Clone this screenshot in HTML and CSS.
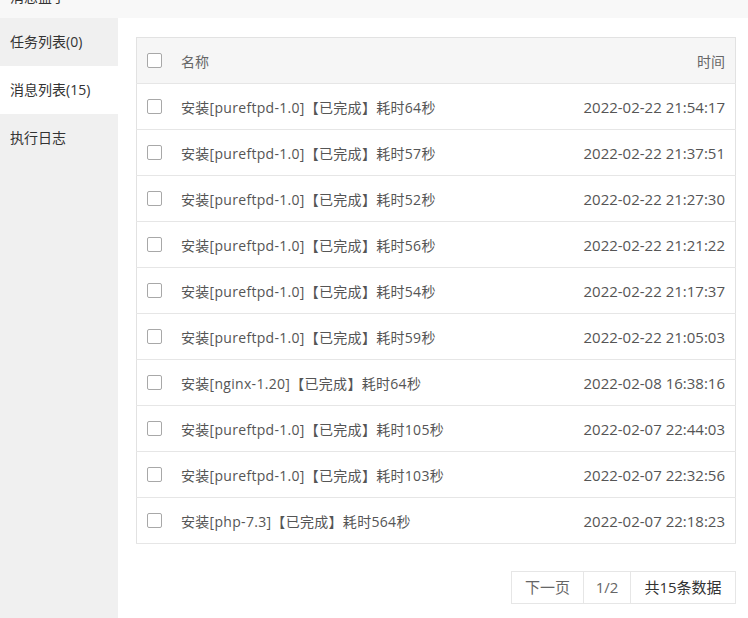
FILE: index.html
```html
<!DOCTYPE html>
<html lang="zh-CN">
<head>
<meta charset="utf-8">
<title>消息盒子</title>
<link rel="stylesheet" href="styles.css">
</head>
<body>
<div class="title">消息盒子</div>
<div class="layout">
  <ul class="side">
    <li class="side-item">任务列表(0)</li>
    <li class="side-item active">消息列表(15)</li>
    <li class="side-item">执行日志</li>
  </ul>
  <div class="main">
    <table class="tbl">
      <thead>
        <tr><th class="c-chk"><span class="chk"></span></th><th class="c-name">名称</th><th class="c-time">时间</th></tr>
      </thead>
      <tbody>
        <tr><td class="c-chk"><span class="chk"></span></td><td class="c-name">安装[pureftpd-1.0]【已完成】耗时64秒</td><td class="c-time">2022-02-22 21:54:17</td></tr>
        <tr><td class="c-chk"><span class="chk"></span></td><td class="c-name">安装[pureftpd-1.0]【已完成】耗时57秒</td><td class="c-time">2022-02-22 21:37:51</td></tr>
        <tr><td class="c-chk"><span class="chk"></span></td><td class="c-name">安装[pureftpd-1.0]【已完成】耗时52秒</td><td class="c-time">2022-02-22 21:27:30</td></tr>
        <tr><td class="c-chk"><span class="chk"></span></td><td class="c-name">安装[pureftpd-1.0]【已完成】耗时56秒</td><td class="c-time">2022-02-22 21:21:22</td></tr>
        <tr><td class="c-chk"><span class="chk"></span></td><td class="c-name">安装[pureftpd-1.0]【已完成】耗时54秒</td><td class="c-time">2022-02-22 21:17:37</td></tr>
        <tr><td class="c-chk"><span class="chk"></span></td><td class="c-name">安装[pureftpd-1.0]【已完成】耗时59秒</td><td class="c-time">2022-02-22 21:05:03</td></tr>
        <tr><td class="c-chk"><span class="chk"></span></td><td class="c-name">安装[nginx-1.20]【已完成】耗时64秒</td><td class="c-time">2022-02-08 16:38:16</td></tr>
        <tr><td class="c-chk"><span class="chk"></span></td><td class="c-name">安装[pureftpd-1.0]【已完成】耗时105秒</td><td class="c-time">2022-02-07 22:44:03</td></tr>
        <tr><td class="c-chk"><span class="chk"></span></td><td class="c-name">安装[pureftpd-1.0]【已完成】耗时103秒</td><td class="c-time">2022-02-07 22:32:56</td></tr>
        <tr><td class="c-chk"><span class="chk"></span></td><td class="c-name">安装[php-7.3]【已完成】耗时564秒</td><td class="c-time">2022-02-07 22:18:23</td></tr>
      </tbody>
    </table>
    <div class="pager-wrap">
      <div class="pager">
        <span class="pg pg-next">下一页</span>
        <span class="pg pg-num">1/2</span>
        <span class="pg pg-total">共15条数据</span>
      </div>
    </div>
  </div>
</div>
</body>
</html>
```

FILE: styles.css
```css
html, body {
  margin: 0;
  padding: 0;
  background: #fff;
  font-family: "Open Sans", "Noto Sans CJK SC", sans-serif;
  color: #555;
  overflow: hidden;
  height: 618px;
}

.title {
  height: 42px;
  line-height: 42px;
  margin-top: -24px;
  padding-left: 10px;
  font-size: 14px;
  color: #333;
  background: #f8f8f8;
}

.layout {
  display: flex;
  height: 600px;
}

.side {
  list-style: none;
  margin: 0;
  padding: 0;
  width: 118px;
  flex: none;
  background: #f0f0f0;
}

.side-item {
  height: 48px;
  line-height: 48px;
  padding-left: 10px;
  font-size: 14px;
  color: #333;
}

.side-item.active {
  background: #fff;
}

.main {
  flex: 1;
  padding: 19px 12px 0 18px;
}

.tbl {
  width: 100%;
  border-collapse: collapse;
  border: 1px solid #e2e2e2;
}

.tbl th, .tbl td {
  height: 45px;
  padding: 0;
  border-bottom: 1px solid #e6e6e6;
  font-weight: normal;
  vertical-align: middle;
}

.tbl thead th {
  background: #f6f6f6;
  color: #666;
  font-size: 14px;
}

.c-chk {
  width: 34px;
  text-align: left;
  padding-left: 10px !important;
}

.chk {
  display: block;
  width: 13px;
  height: 13px;
  border: 1px solid #a8a8a8;
  border-radius: 2px;
  background: #fff;
}

.c-name {
  text-align: left;
  font-size: 14px;
  letter-spacing: 0.3px;
  color: #555;
}

.tbl thead .c-name { letter-spacing: 0; }

.c-time {
  text-align: right;
  padding-right: 10px !important;
  font-size: 15px;
  color: #555;
}

.tbl thead .c-time { font-size: 14px; }

.pager-wrap {
  display: flex;
  justify-content: flex-end;
  margin-top: 27px;
}

.pager {
  display: flex;
}

.pg {
  height: 31px;
  line-height: 31px;
  border: 1px solid #e6e6e6;
  margin-left: -1px;
  font-size: 15px;
  color: #666;
  text-align: center;
}

.pg-next { width: 71px; }
.pg-num { width: 46px; }
.pg-total { width: 104px; color: #333; }
```
